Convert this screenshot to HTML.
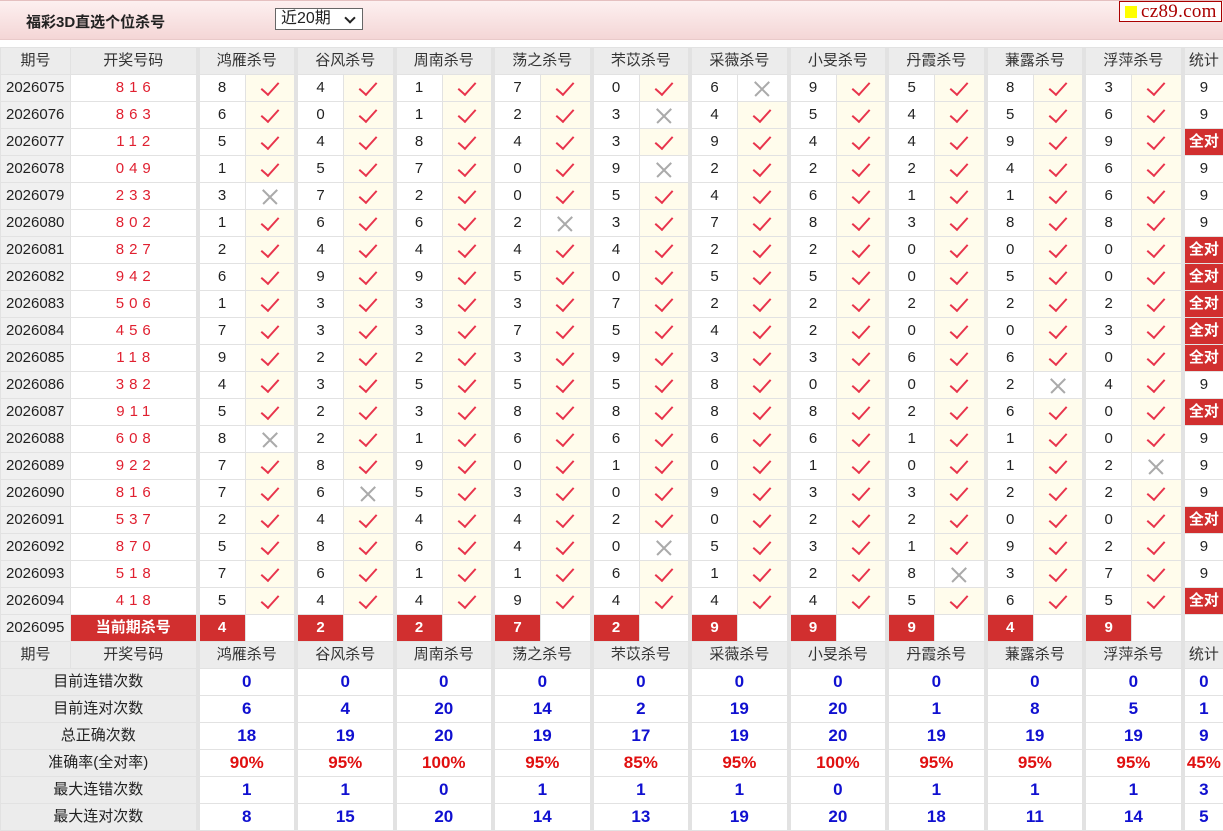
<!DOCTYPE html>
<html><head><meta charset="utf-8"><style>
body{margin:0;width:1223px;height:829px;overflow:hidden;background:#fff;font-family:"Liberation Sans","Noto Sans CJK SC",sans-serif;color:#222}
.top{position:absolute;left:0;top:0;width:1223px;height:38px;background:linear-gradient(#fdf0f0,#f4d6d6);border-top:1px solid #e5c0c0;border-bottom:1px solid #e9caca}
.title{position:absolute;left:26px;top:10px;font-size:15px;font-weight:bold;color:#222}
.sel{position:absolute;left:275px;top:7px;width:88px;height:22px;border:1px solid #666;background:#fff;font-size:16px;box-sizing:border-box;padding-left:5px;line-height:20px}
.sel b{position:absolute;right:8px;top:5px;width:6px;height:6px;border-right:2px solid #222;border-bottom:2px solid #222;transform:rotate(45deg)}
.logo{position:absolute;left:1119px;top:0;width:103px;height:21px;border:1px solid #a00;background:#fff;color:#a00;font-family:"Liberation Serif",serif;font-size:19px;line-height:20px;box-sizing:border-box;padding-left:21px;letter-spacing:.3px;overflow:hidden}
.logo i{position:absolute;left:5px;top:4px;width:12px;height:12px;background:#ff0}
table{position:absolute;left:0;top:47px;border-collapse:collapse;table-layout:fixed;width:1223px;font-size:15px}
td{height:26px;border:1px solid #e2e2e2;text-align:center;padding:0;line-height:26px;white-space:nowrap;overflow:hidden}
td.g{border-left:4px solid #e2e2e2}
tr.h td{background:#ececec;color:#333}
td.p{background:#f0f0f0;text-align:left;padding-left:5px}
td.r{color:#e02030;letter-spacing:5px;padding-left:5px}
td.y{background:#fffcec;position:relative}
td.n{background:#fff;position:relative}
td.y:after{content:"";position:absolute;left:50%;top:3px;width:8px;height:15px;margin-left:-5px;border-right:2.5px solid #e8344c;border-bottom:2.5px solid #e8344c;transform:rotate(42deg)}
td.n:before,td.n:after{content:"";position:absolute;left:50%;top:50%;width:20px;height:1.5px;margin-left:-10px;background:#aaa;transform:rotate(45deg)}
td.n:after{transform:rotate(-45deg)}
td.a{background:#d12f2f;color:#fff;font-weight:bold}
td.k{background:#d12f2f;color:#fff;font-weight:bold}
tr.s td{background:#fff}
tr.s td.l{background:#ececec}
tr.s td.v{color:#1010d0;font-weight:bold;font-size:17px}
tr.s td.v.pc{color:#e01010}
</style></head><body>
<div class="top"><div class="title">福彩3D直选个位杀号</div><div class="sel">近20期<b></b></div><div class="logo"><i></i>cz89.com</div></div>
<table>
<colgroup><col style="width:70px"><col style="width:127px">
<col style="width:47.5px"><col style="width:51px"><col style="width:47.5px"><col style="width:51px"><col style="width:47.5px"><col style="width:51px"><col style="width:47.5px"><col style="width:51px"><col style="width:47.5px"><col style="width:51px"><col style="width:47.5px"><col style="width:51px"><col style="width:47.5px"><col style="width:51px"><col style="width:47.5px"><col style="width:51px"><col style="width:47.5px"><col style="width:51px"><col style="width:47.5px"><col style="width:51px"><col style="width:41px"></colgroup>
<tr class="h"><td>期号</td><td>开奖号码</td><td class="g" colspan="2">鸿雁杀号</td><td class="g" colspan="2">谷风杀号</td><td class="g" colspan="2">周南杀号</td><td class="g" colspan="2">荡之杀号</td><td class="g" colspan="2">芣苡杀号</td><td class="g" colspan="2">采薇杀号</td><td class="g" colspan="2">小旻杀号</td><td class="g" colspan="2">丹霞杀号</td><td class="g" colspan="2">蒹露杀号</td><td class="g" colspan="2">浮萍杀号</td><td class="g">统计</td></tr>
<tr><td class="p">2026075</td><td class="r">816</td><td class="g">8</td><td class="y"></td><td class="g">4</td><td class="y"></td><td class="g">1</td><td class="y"></td><td class="g">7</td><td class="y"></td><td class="g">0</td><td class="y"></td><td class="g">6</td><td class="n"></td><td class="g">9</td><td class="y"></td><td class="g">5</td><td class="y"></td><td class="g">8</td><td class="y"></td><td class="g">3</td><td class="y"></td><td class="g">9</td></tr>
<tr><td class="p">2026076</td><td class="r">863</td><td class="g">6</td><td class="y"></td><td class="g">0</td><td class="y"></td><td class="g">1</td><td class="y"></td><td class="g">2</td><td class="y"></td><td class="g">3</td><td class="n"></td><td class="g">4</td><td class="y"></td><td class="g">5</td><td class="y"></td><td class="g">4</td><td class="y"></td><td class="g">5</td><td class="y"></td><td class="g">6</td><td class="y"></td><td class="g">9</td></tr>
<tr><td class="p">2026077</td><td class="r">112</td><td class="g">5</td><td class="y"></td><td class="g">4</td><td class="y"></td><td class="g">8</td><td class="y"></td><td class="g">4</td><td class="y"></td><td class="g">3</td><td class="y"></td><td class="g">9</td><td class="y"></td><td class="g">4</td><td class="y"></td><td class="g">4</td><td class="y"></td><td class="g">9</td><td class="y"></td><td class="g">9</td><td class="y"></td><td class="g a">全对</td></tr>
<tr><td class="p">2026078</td><td class="r">049</td><td class="g">1</td><td class="y"></td><td class="g">5</td><td class="y"></td><td class="g">7</td><td class="y"></td><td class="g">0</td><td class="y"></td><td class="g">9</td><td class="n"></td><td class="g">2</td><td class="y"></td><td class="g">2</td><td class="y"></td><td class="g">2</td><td class="y"></td><td class="g">4</td><td class="y"></td><td class="g">6</td><td class="y"></td><td class="g">9</td></tr>
<tr><td class="p">2026079</td><td class="r">233</td><td class="g">3</td><td class="n"></td><td class="g">7</td><td class="y"></td><td class="g">2</td><td class="y"></td><td class="g">0</td><td class="y"></td><td class="g">5</td><td class="y"></td><td class="g">4</td><td class="y"></td><td class="g">6</td><td class="y"></td><td class="g">1</td><td class="y"></td><td class="g">1</td><td class="y"></td><td class="g">6</td><td class="y"></td><td class="g">9</td></tr>
<tr><td class="p">2026080</td><td class="r">802</td><td class="g">1</td><td class="y"></td><td class="g">6</td><td class="y"></td><td class="g">6</td><td class="y"></td><td class="g">2</td><td class="n"></td><td class="g">3</td><td class="y"></td><td class="g">7</td><td class="y"></td><td class="g">8</td><td class="y"></td><td class="g">3</td><td class="y"></td><td class="g">8</td><td class="y"></td><td class="g">8</td><td class="y"></td><td class="g">9</td></tr>
<tr><td class="p">2026081</td><td class="r">827</td><td class="g">2</td><td class="y"></td><td class="g">4</td><td class="y"></td><td class="g">4</td><td class="y"></td><td class="g">4</td><td class="y"></td><td class="g">4</td><td class="y"></td><td class="g">2</td><td class="y"></td><td class="g">2</td><td class="y"></td><td class="g">0</td><td class="y"></td><td class="g">0</td><td class="y"></td><td class="g">0</td><td class="y"></td><td class="g a">全对</td></tr>
<tr><td class="p">2026082</td><td class="r">942</td><td class="g">6</td><td class="y"></td><td class="g">9</td><td class="y"></td><td class="g">9</td><td class="y"></td><td class="g">5</td><td class="y"></td><td class="g">0</td><td class="y"></td><td class="g">5</td><td class="y"></td><td class="g">5</td><td class="y"></td><td class="g">0</td><td class="y"></td><td class="g">5</td><td class="y"></td><td class="g">0</td><td class="y"></td><td class="g a">全对</td></tr>
<tr><td class="p">2026083</td><td class="r">506</td><td class="g">1</td><td class="y"></td><td class="g">3</td><td class="y"></td><td class="g">3</td><td class="y"></td><td class="g">3</td><td class="y"></td><td class="g">7</td><td class="y"></td><td class="g">2</td><td class="y"></td><td class="g">2</td><td class="y"></td><td class="g">2</td><td class="y"></td><td class="g">2</td><td class="y"></td><td class="g">2</td><td class="y"></td><td class="g a">全对</td></tr>
<tr><td class="p">2026084</td><td class="r">456</td><td class="g">7</td><td class="y"></td><td class="g">3</td><td class="y"></td><td class="g">3</td><td class="y"></td><td class="g">7</td><td class="y"></td><td class="g">5</td><td class="y"></td><td class="g">4</td><td class="y"></td><td class="g">2</td><td class="y"></td><td class="g">0</td><td class="y"></td><td class="g">0</td><td class="y"></td><td class="g">3</td><td class="y"></td><td class="g a">全对</td></tr>
<tr><td class="p">2026085</td><td class="r">118</td><td class="g">9</td><td class="y"></td><td class="g">2</td><td class="y"></td><td class="g">2</td><td class="y"></td><td class="g">3</td><td class="y"></td><td class="g">9</td><td class="y"></td><td class="g">3</td><td class="y"></td><td class="g">3</td><td class="y"></td><td class="g">6</td><td class="y"></td><td class="g">6</td><td class="y"></td><td class="g">0</td><td class="y"></td><td class="g a">全对</td></tr>
<tr><td class="p">2026086</td><td class="r">382</td><td class="g">4</td><td class="y"></td><td class="g">3</td><td class="y"></td><td class="g">5</td><td class="y"></td><td class="g">5</td><td class="y"></td><td class="g">5</td><td class="y"></td><td class="g">8</td><td class="y"></td><td class="g">0</td><td class="y"></td><td class="g">0</td><td class="y"></td><td class="g">2</td><td class="n"></td><td class="g">4</td><td class="y"></td><td class="g">9</td></tr>
<tr><td class="p">2026087</td><td class="r">911</td><td class="g">5</td><td class="y"></td><td class="g">2</td><td class="y"></td><td class="g">3</td><td class="y"></td><td class="g">8</td><td class="y"></td><td class="g">8</td><td class="y"></td><td class="g">8</td><td class="y"></td><td class="g">8</td><td class="y"></td><td class="g">2</td><td class="y"></td><td class="g">6</td><td class="y"></td><td class="g">0</td><td class="y"></td><td class="g a">全对</td></tr>
<tr><td class="p">2026088</td><td class="r">608</td><td class="g">8</td><td class="n"></td><td class="g">2</td><td class="y"></td><td class="g">1</td><td class="y"></td><td class="g">6</td><td class="y"></td><td class="g">6</td><td class="y"></td><td class="g">6</td><td class="y"></td><td class="g">6</td><td class="y"></td><td class="g">1</td><td class="y"></td><td class="g">1</td><td class="y"></td><td class="g">0</td><td class="y"></td><td class="g">9</td></tr>
<tr><td class="p">2026089</td><td class="r">922</td><td class="g">7</td><td class="y"></td><td class="g">8</td><td class="y"></td><td class="g">9</td><td class="y"></td><td class="g">0</td><td class="y"></td><td class="g">1</td><td class="y"></td><td class="g">0</td><td class="y"></td><td class="g">1</td><td class="y"></td><td class="g">0</td><td class="y"></td><td class="g">1</td><td class="y"></td><td class="g">2</td><td class="n"></td><td class="g">9</td></tr>
<tr><td class="p">2026090</td><td class="r">816</td><td class="g">7</td><td class="y"></td><td class="g">6</td><td class="n"></td><td class="g">5</td><td class="y"></td><td class="g">3</td><td class="y"></td><td class="g">0</td><td class="y"></td><td class="g">9</td><td class="y"></td><td class="g">3</td><td class="y"></td><td class="g">3</td><td class="y"></td><td class="g">2</td><td class="y"></td><td class="g">2</td><td class="y"></td><td class="g">9</td></tr>
<tr><td class="p">2026091</td><td class="r">537</td><td class="g">2</td><td class="y"></td><td class="g">4</td><td class="y"></td><td class="g">4</td><td class="y"></td><td class="g">4</td><td class="y"></td><td class="g">2</td><td class="y"></td><td class="g">0</td><td class="y"></td><td class="g">2</td><td class="y"></td><td class="g">2</td><td class="y"></td><td class="g">0</td><td class="y"></td><td class="g">0</td><td class="y"></td><td class="g a">全对</td></tr>
<tr><td class="p">2026092</td><td class="r">870</td><td class="g">5</td><td class="y"></td><td class="g">8</td><td class="y"></td><td class="g">6</td><td class="y"></td><td class="g">4</td><td class="y"></td><td class="g">0</td><td class="n"></td><td class="g">5</td><td class="y"></td><td class="g">3</td><td class="y"></td><td class="g">1</td><td class="y"></td><td class="g">9</td><td class="y"></td><td class="g">2</td><td class="y"></td><td class="g">9</td></tr>
<tr><td class="p">2026093</td><td class="r">518</td><td class="g">7</td><td class="y"></td><td class="g">6</td><td class="y"></td><td class="g">1</td><td class="y"></td><td class="g">1</td><td class="y"></td><td class="g">6</td><td class="y"></td><td class="g">1</td><td class="y"></td><td class="g">2</td><td class="y"></td><td class="g">8</td><td class="n"></td><td class="g">3</td><td class="y"></td><td class="g">7</td><td class="y"></td><td class="g">9</td></tr>
<tr><td class="p">2026094</td><td class="r">418</td><td class="g">5</td><td class="y"></td><td class="g">4</td><td class="y"></td><td class="g">4</td><td class="y"></td><td class="g">9</td><td class="y"></td><td class="g">4</td><td class="y"></td><td class="g">4</td><td class="y"></td><td class="g">4</td><td class="y"></td><td class="g">5</td><td class="y"></td><td class="g">6</td><td class="y"></td><td class="g">5</td><td class="y"></td><td class="g a">全对</td></tr>
<tr><td class="p">2026095</td><td class="k">当前期杀号</td><td class="g k">4</td><td></td><td class="g k">2</td><td></td><td class="g k">2</td><td></td><td class="g k">7</td><td></td><td class="g k">2</td><td></td><td class="g k">9</td><td></td><td class="g k">9</td><td></td><td class="g k">9</td><td></td><td class="g k">4</td><td></td><td class="g k">9</td><td></td><td class="g"></td></tr>
<tr class="h"><td>期号</td><td>开奖号码</td><td class="g" colspan="2">鸿雁杀号</td><td class="g" colspan="2">谷风杀号</td><td class="g" colspan="2">周南杀号</td><td class="g" colspan="2">荡之杀号</td><td class="g" colspan="2">芣苡杀号</td><td class="g" colspan="2">采薇杀号</td><td class="g" colspan="2">小旻杀号</td><td class="g" colspan="2">丹霞杀号</td><td class="g" colspan="2">蒹露杀号</td><td class="g" colspan="2">浮萍杀号</td><td class="g">统计</td></tr>
<tr class="s"><td class="l" colspan="2">目前连错次数</td><td class="g v" colspan="2">0</td><td class="g v" colspan="2">0</td><td class="g v" colspan="2">0</td><td class="g v" colspan="2">0</td><td class="g v" colspan="2">0</td><td class="g v" colspan="2">0</td><td class="g v" colspan="2">0</td><td class="g v" colspan="2">0</td><td class="g v" colspan="2">0</td><td class="g v" colspan="2">0</td><td class="g v">0</td></tr>
<tr class="s"><td class="l" colspan="2">目前连对次数</td><td class="g v" colspan="2">6</td><td class="g v" colspan="2">4</td><td class="g v" colspan="2">20</td><td class="g v" colspan="2">14</td><td class="g v" colspan="2">2</td><td class="g v" colspan="2">19</td><td class="g v" colspan="2">20</td><td class="g v" colspan="2">1</td><td class="g v" colspan="2">8</td><td class="g v" colspan="2">5</td><td class="g v">1</td></tr>
<tr class="s"><td class="l" colspan="2">总正确次数</td><td class="g v" colspan="2">18</td><td class="g v" colspan="2">19</td><td class="g v" colspan="2">20</td><td class="g v" colspan="2">19</td><td class="g v" colspan="2">17</td><td class="g v" colspan="2">19</td><td class="g v" colspan="2">20</td><td class="g v" colspan="2">19</td><td class="g v" colspan="2">19</td><td class="g v" colspan="2">19</td><td class="g v">9</td></tr>
<tr class="s"><td class="l" colspan="2">准确率(全对率)</td><td class="g v pc" colspan="2">90%</td><td class="g v pc" colspan="2">95%</td><td class="g v pc" colspan="2">100%</td><td class="g v pc" colspan="2">95%</td><td class="g v pc" colspan="2">85%</td><td class="g v pc" colspan="2">95%</td><td class="g v pc" colspan="2">100%</td><td class="g v pc" colspan="2">95%</td><td class="g v pc" colspan="2">95%</td><td class="g v pc" colspan="2">95%</td><td class="g v pc">45%</td></tr>
<tr class="s"><td class="l" colspan="2">最大连错次数</td><td class="g v" colspan="2">1</td><td class="g v" colspan="2">1</td><td class="g v" colspan="2">0</td><td class="g v" colspan="2">1</td><td class="g v" colspan="2">1</td><td class="g v" colspan="2">1</td><td class="g v" colspan="2">0</td><td class="g v" colspan="2">1</td><td class="g v" colspan="2">1</td><td class="g v" colspan="2">1</td><td class="g v">3</td></tr>
<tr class="s"><td class="l" colspan="2">最大连对次数</td><td class="g v" colspan="2">8</td><td class="g v" colspan="2">15</td><td class="g v" colspan="2">20</td><td class="g v" colspan="2">14</td><td class="g v" colspan="2">13</td><td class="g v" colspan="2">19</td><td class="g v" colspan="2">20</td><td class="g v" colspan="2">18</td><td class="g v" colspan="2">11</td><td class="g v" colspan="2">14</td><td class="g v">5</td></tr>
</table>
</body></html>
